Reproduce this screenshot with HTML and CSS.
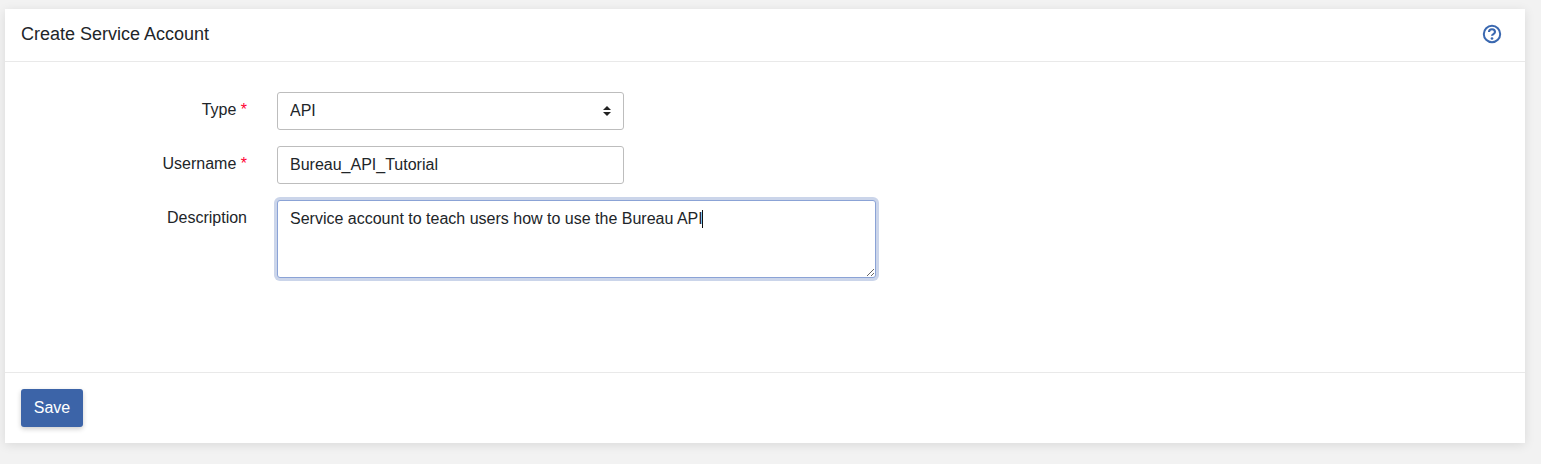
FILE: index.html
```html
<!DOCTYPE html>
<html lang="en">
<head>
<meta charset="utf-8">
<title>Create Service Account</title>
<link rel="stylesheet" href="styles.css">
</head>
<body>
<main class="card">
  <header class="card-header">
    <h1 class="card-title">Create Service Account</h1>
    <a class="help" href="#" aria-label="Help">
      <svg class="help-icon" viewBox="0 0 20 20" width="20" height="20" aria-hidden="true">
        <circle cx="10" cy="10" r="8.2" fill="none" stroke="currentColor" stroke-width="2"/>
        <path d="M7 8.1a3 2.9 0 0 1 6 0c0 2-3 1.9-3 3.7" fill="none" stroke="currentColor" stroke-width="2.1"/>
        <circle cx="10" cy="14.5" r="1.35" fill="currentColor"/>
      </svg>
    </a>
  </header>
  <form class="card-body">
    <div class="row">
      <label class="label" for="type">Type <span class="req">*</span></label>
      <div class="select-wrap">
        <select class="control select" id="type"><option>API</option></select>
        <svg class="select-arrows" viewBox="0 0 8 10" width="8" height="10" aria-hidden="true">
          <path d="M4 0 8 4H0zM4 10 0 6h8z" fill="#222"/>
        </svg>
      </div>
    </div>
    <div class="row">
      <label class="label" for="username">Username <span class="req">*</span></label>
      <input class="control input" id="username" type="text" value="Bureau_API_Tutorial">
    </div>
    <div class="row">
      <label class="label" for="description">Description</label>
      <div class="textarea-wrap">
        <textarea class="control textarea" id="description">Service account to teach users how to use the Bureau API</textarea>
        <span class="caret"></span>
      </div>
    </div>
  </form>
  <footer class="card-footer">
    <button class="btn" type="button">Save</button>
  </footer>
</main>
</body>
</html>
```
FILE: styles.css
```css
* { box-sizing: border-box; }
html, body { height: 100%; }
body {
  margin: 0;
  padding: 9px 16px 21px 5px;
  background: #f2f2f2;
  font-family: "Liberation Sans", Arial, sans-serif;
  font-size: 16px;
  color: #212529;
  overflow: hidden;
}
.card {
  background: #fff;
  height: 434px;
  box-shadow: 0 2px 10px rgba(0, 0, 0, 0.1);
  display: flex;
  flex-direction: column;
}
.card-header {
  height: 53px;
  padding: 0 23px 2px 16px;
  border-bottom: 1px solid #e9e9e9;
  display: flex;
  align-items: center;
  justify-content: space-between;
}
.card-title {
  margin: 0;
  font-size: 18px;
  font-weight: 400;
}
.help { color: #3a68b0; display: flex; }
.card-body {
  flex: 1;
  padding-top: 30px;
  display: flex;
  flex-direction: column;
  gap: 16px;
}
.row { display: flex; align-items: flex-start; }
.label {
  width: 272px;
  padding: 9px 30px 0 0;
  text-align: right;
  line-height: 18px;
}
.req { color: #ff0033; }
.control {
  font-family: inherit;
  font-size: 16px;
  color: #212529;
  background: #fff;
  border: 1px solid #bdbdbd;
  border-radius: 3px;
  outline: none;
}
.select-wrap { position: relative; width: 347px; height: 38px; }
.select {
  width: 100%;
  height: 100%;
  padding: 0 12px 2px;
  appearance: none;
}
.select-arrows { position: absolute; right: 13px; top: 14px; }
.input { width: 347px; height: 38px; padding: 0 12px; }
.textarea-wrap { position: relative; width: 599px; height: 78px; }
.textarea {
  display: block;
  width: 100%;
  height: 100%;
  padding: 7px 12px;
  line-height: 21.6px;
  border-color: #8ba3d6;
  box-shadow: 0 0 0 3px #cbd5ea;
}
.caret {
  position: absolute;
  left: 425px;
  top: 10px;
  width: 1px;
  height: 18px;
  background: #111;
}
.card-footer {
  height: 71px;
  padding: 16px;
  border-top: 1px solid #e9e9e9;
}
.btn {
  width: 62px;
  height: 38px;
  font-family: inherit;
  font-size: 16px;
  color: #fff;
  background: #3c64a8;
  border: 0;
  border-radius: 3px;
  box-shadow: 0 2px 5px rgba(0, 0, 0, 0.2);
}
```
